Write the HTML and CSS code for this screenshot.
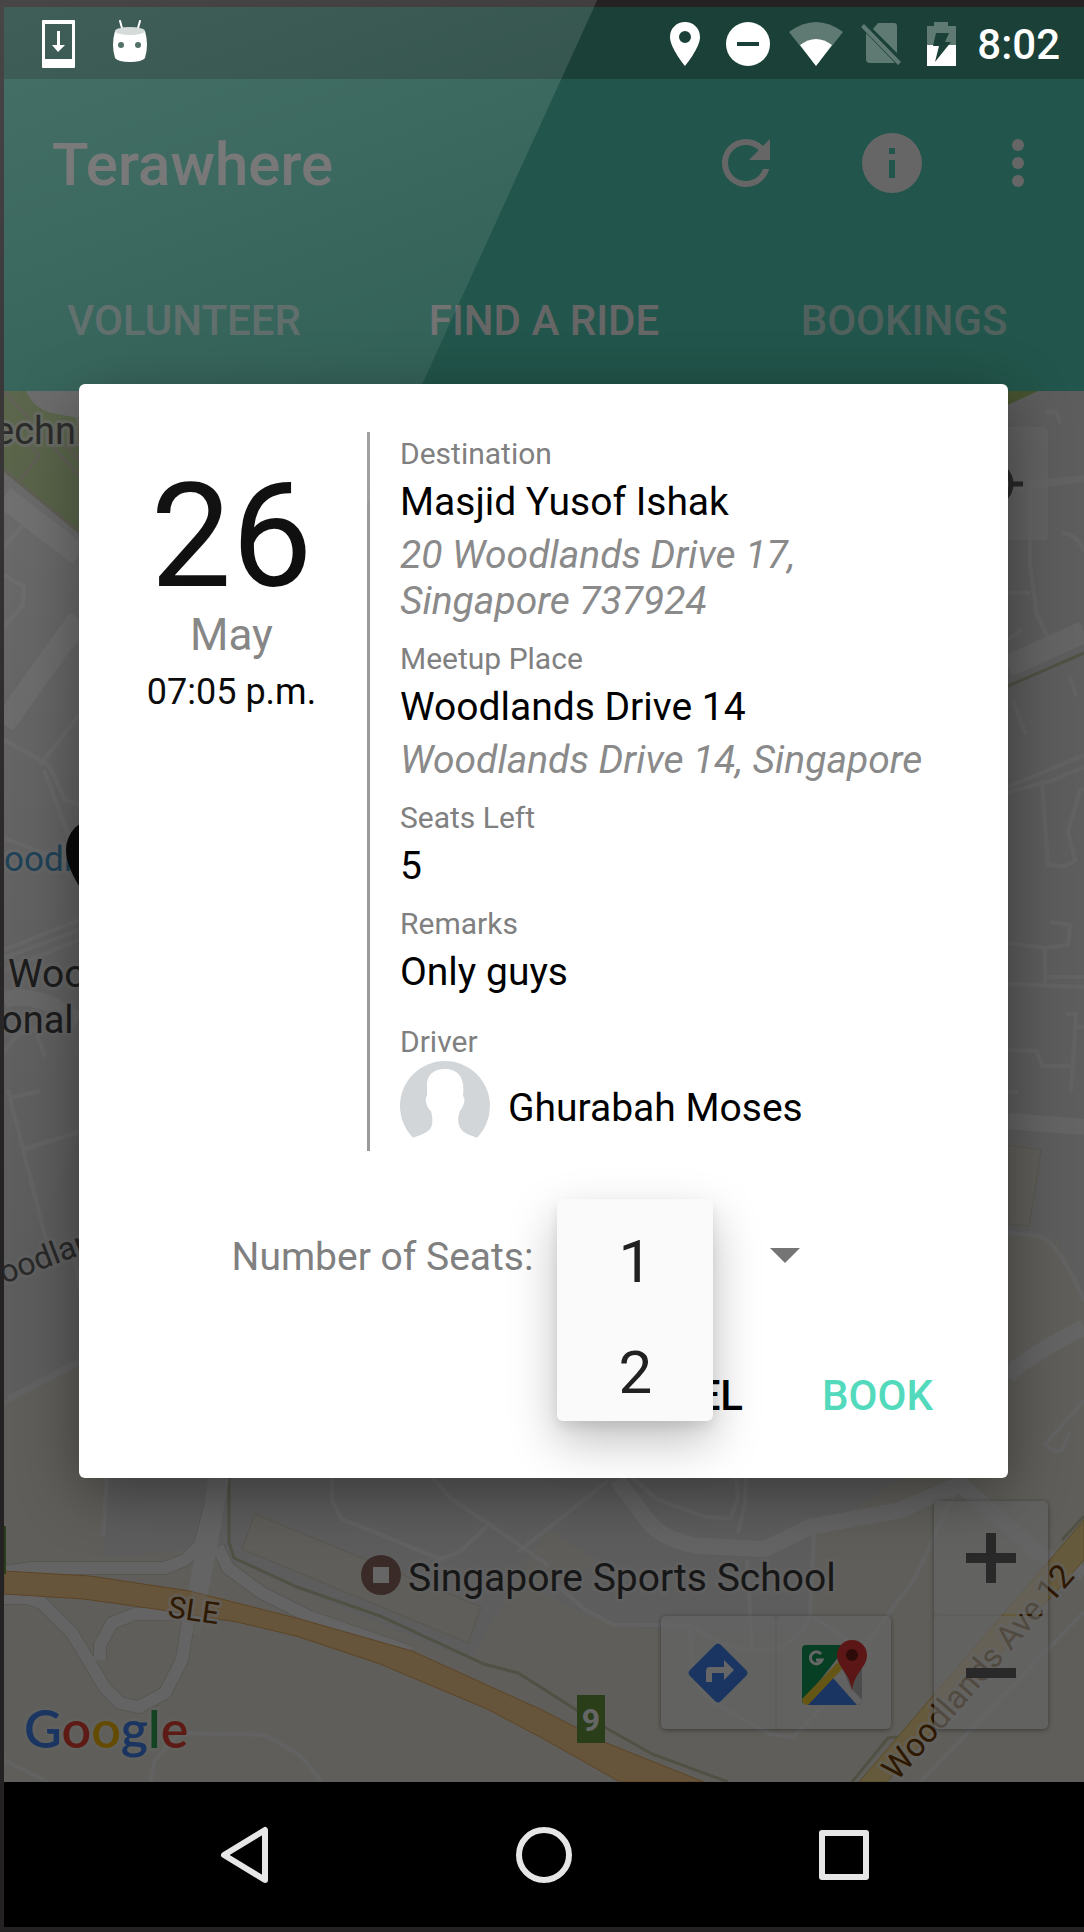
FILE: index.html
```html
<!DOCTYPE html>
<html lang="en">
<head>
<meta charset="utf-8">
<meta name="viewport" content="width=device-width, initial-scale=1">
<title>Terawhere</title>
<link rel="stylesheet" href="styles.css">
</head>
<body>
<div class="device">
  <div class="status">
    <svg class="status-download" viewBox="0 0 33 48" width="33" height="48" aria-hidden="true"><path fill="#fff" fill-rule="evenodd" d="M1 0h31q1 0 1 1v46q0 1-1 1H1q-1 0-1-1V1q0-1 1-1zM3 4v35h27V4z"/><path fill="#fff" d="M15 11h3v14h5l-7 7-6-7h5z"/></svg>
    <svg class="status-android" viewBox="0 0 34 42" width="34" height="42" aria-hidden="true"><path stroke="#fff" stroke-width="2" stroke-linecap="round" d="M7 1l2 7M27 1l-2 7"/><path fill="#fff" d="M2 11q15 4 30 0 4 14 0 27-3 4-15 4T2 38q-4-13 0-27z"/><ellipse cx="17" cy="11" rx="15" ry="4" fill="#cdd5d3"/><circle cx="8" cy="25" r="3" fill="#355950"/><circle cx="25" cy="25" r="3" fill="#355950"/></svg>
    <span class="spacer"></span>
    <svg viewBox="0 0 30 44" width="30" height="44" aria-hidden="true"><path fill="#fff" fill-rule="evenodd" d="M15 0C7 0 0 6 0 15c0 11 15 29 15 29s15-18 15-29C30 6 23 0 15 0zm0 9a6 6 0 1 1 0 12 6 6 0 0 1 0-12z"/></svg>
    <svg class="status-dnd" viewBox="0 0 44 44" width="44" height="44" aria-hidden="true"><circle cx="22" cy="22" r="22" fill="#fff"/><path fill="#1b4038" d="M11 20h22v4H11z"/></svg>
    <svg class="status-wifi" viewBox="0 0 54 44" width="54" height="44" aria-hidden="true"><path fill="#5f7a73" d="M0 10Q27-10 54 10L27 44z"/><path fill="#fff" d="M11 23q16-12 32 0L27 44z"/></svg>
    <svg class="status-sim" viewBox="0 0 40 44" width="40" height="44" aria-hidden="true"><path fill="#5f7a73" d="M17 1h16q3 0 3 3v27L12 7zM5 11l29 30H9q-4 0-4-4zM0 5l3-3 37 38-3 3z"/></svg>
    <svg class="status-battery" viewBox="0 0 29 44" width="29" height="44" aria-hidden="true"><path fill="#5f7a73" d="M0 4h7V0h14v4h8v19H0z"/><path fill="#fff" d="M0 23h29v21H0z"/><path fill="#1b4038" d="M9 11h13l-4 9h6L8 40l4-16H6z"/></svg>
    <time class="clock">8:02</time>
  </div>

  <div class="app">
    <header class="header">
      <div class="toolbar">
        <h1 class="title">Terawhere</h1>
        <button class="tool" type="button" aria-label="Refresh"><svg viewBox="0 0 24 24" width="72" height="72"><path fill="#fff" d="M17.65 6.35A7.96 7.96 0 0 0 12 4a8 8 0 1 0 7.73 10h-2.08A6 6 0 1 1 12 6c1.66 0 3.14.69 4.22 1.78L13 11h7V4z"/></svg></button>
        <button class="tool" type="button" aria-label="Information"><svg viewBox="0 0 24 24" width="72" height="72"><path fill="#fff" d="M12 2a10 10 0 1 0 0 20 10 10 0 0 0 0-20zm1 15h-2v-6h2zm0-8h-2V7h2z"/></svg></button>
        <button class="tool tool-more" type="button" aria-label="More options"><svg viewBox="0 0 24 24" width="72" height="72"><g fill="#fff"><circle cx="12" cy="6" r="2"/><circle cx="12" cy="12" r="2"/><circle cx="12" cy="18" r="2"/></g></svg></button>
      </div>
      <nav class="tabs">
        <a class="tab" href="#volunteer">VOLUNTEER</a>
        <a class="tab tab-active" href="#find">FIND A RIDE</a>
        <a class="tab" href="#bookings">BOOKINGS</a>
      </nav>
    </header>

    <main class="map">
      <svg class="map-canvas" viewBox="4 391 1080 1391" preserveAspectRatio="xMidYMid slice" aria-hidden="true">
        <path fill="#e9e9e9" d="M4 391h1080v1391H4z"/>
        <!-- parks and built-up blocks -->
        <path fill="#b8d690" d="M4 391h75v141L4 472z"/>
        <path fill="#b0d078" d="M1008 391h30l-30 14z"/>
        <path fill="#e9e9e9" d="M26 391q8 18 26 22l27 5v-27z"/>
        <path fill="#edebe0" d="M4 1405l86-46 14 118v80l80-6 45 4 5 8 236 98 58-100 20-32 50 32-58 30q60 40 150 41l120 0 2-94 88-60 108-246 40 4q20 8 36 64v481H4z"/>
        <path fill="#edebe0" stroke="#dcd5bd" d="M255 1514l226 93-13 36-226-94zM1008 1145l33 5-12 76-21-2z"/>
        <!-- minor roads -->
        <g fill="none" stroke="#f5f5f5" stroke-width="4">
          <path d="M4 547l24-28M4 575l20 12-1 18-19 22M4 740l45 25 16 35 14 4M40 765l39-50M44 770l30 80M65 635l14 8M4 838l75 28M4 958l75-28M4 970l75-30M4 950l75-30M4 1052l14-18 25-6M37 1035l8 22M10 1098l30-7M8 1090l38 150M24 1149l55-17M4 1403l75-40M8 1398l71-38M75 1260l10 50"/>
          <path d="M1046 413l10-2 4 12M1008 490l76-10M1028 483l76-8M1030 480v85l7 50 11 22M1008 593h22M1062 533q14 0 22 18M1008 640l14-11M1013 702l13 32M1070 676l6 20M1008 787l76-32M1008 792l40-10 36-15M1042 780l6 85 18 1 9-6-7-28 12-42 4-1M1008 943l37 5v35M1050 922l20 3-2 20-23 3M1008 984l76 3M1045 977h39M1008 1050l29 1 5 15h28M1066 1014h10l-5 78M1076 1027h8M1008 1092h10M1008 1233l32 3q20 8 44 65M1084 1400l-39 45 10 7 7-2 8-18"/>
          <path d="M107 1477l-4 60M332 1477v24l10 18 98 40 20-7 29-28-39-26-18-21M489 1524l60 42M518 1552l90-71M632 1477l24 22 50 18 24 2 8-20-2-22M746 1477l-1 26-7 30M814 1534l-4 82q-14 32-45 34-30 2-58-14l-17-11h-76l-30-16-30-27M747 1560l5 90M690 1625q0 60 20 75l60 34 23 3 30-30 37-55 55-74 41-90M812 1616l60 40M1084 1612l-164 170M150 1782l5-22 25-27 85 2 35 20 22 27M4 1760l44 22"/>
        </g>
        <!-- main roads -->
        <g fill="none" stroke="#fbfbfb">
          <path stroke-width="22" d="M4 497l75 58M4 724l75-105M1008 666l76-34"/>
          <path stroke-width="16" d="M4 1000q30-10 75 20M1008 1121l76 6M1008 1377q10-16 76-50M617 1480l32 42q14 18 50 24l66 3 45-22 90-17 60-26 80 70 44 20"/>
        </g>
        <g fill="none" stroke="#c9c9ac" stroke-width="3">
          <path d="M1008 686l76-33M4 470l75 62M4 391l75 85M20 480l20-25-12-10 10-15M50 430l30 30M229 1477v65l5 16 63 29 83 29 104 48 34 9 24 15 50 32 60 34 76 28M1084 1516l-22 24M852 1782l36-44 10-1"/>
        </g>
        <!-- expressway interchange -->
        <g fill="none" stroke="#d9d7cc" stroke-width="14" stroke-linejoin="round">
          <path d="M4 1572l28-4h133l20-8 15-15 18-68M4 1598h24l14 5 30 30 33 55 15 15 19 4 26-14 17-33 8-50 25-105M100 1660v-15l12-22 23-9h100M218 1547l10 21 34 25 48 24 100 35"/>
        </g>
        <g fill="none" stroke="#fbfbfb" stroke-width="12" stroke-linejoin="round">
          <path d="M4 1572l28-4h133l20-8 15-15 18-68M4 1598h24l14 5 30 30 33 55 15 15 19 4 26-14 17-33 8-50 25-105M100 1660v-15l12-22 23-9h100M218 1547l10 21 34 25 48 24 100 35"/>
          <path stroke-width="20" d="M219 1477l-13 75-12 58"/>
        </g>
        <path fill="#ffd293" stroke="#e6ab60" d="M4 1571l86 5 100 15 110 28 112 32 130 59 62 32 100 40h-84l-78-44-55-29-107-45-84-28-59-14-82-13-71-10-80-5z"/>
        <path stroke="#fbfbfb" stroke-width="16" d="M206 1560l-14 74" opacity=".35"/>
        <path fill="#ffe196" stroke="#dcbc6c" d="M859 1782l225-262v40l-197 222z"/>
        <!-- labels -->
        <g class="map-text">
          <text x="-6" y="444" font-size="38">echni</text>
          <text x="4" y="871" font-size="35" fill="#3b96cc">oodl</text>
          <text x="8" y="987" font-size="39">Woo</text>
          <text x="1" y="1033" font-size="38">onal</text>
          <text font-size="32" fill="#666" transform="translate(4 1284) rotate(-21)">oodlan</text>
          <text x="408" y="1591" font-size="39">Singapore Sports School</text>
          <text font-size="30" fill="#733c00" transform="translate(167 1617) rotate(8)">SLE</text>
          <text font-size="33" fill="#733c00" transform="translate(897 1782) rotate(-49)">Woodlands Ave 12</text>
        </g>
        <path fill="#000" d="M98 818a32 32 0 0 0-32 32c0 26 32 62 32 62z"/>
        <circle cx="381" cy="1575" r="20" fill="#916c64"/><path fill="#fff" d="M373 1567h16v16h-16z"/>
        <path fill="#6b9b43" d="M577 1695h28v48h-28zM4 1526h2v48H4z"/>
        <text class="shield" x="591" y="1731">9</text>
      </svg>
      <div class="map-controls">
        <button class="control" type="button" aria-label="My location"><svg viewBox="0 0 64 64" width="64" height="64"><circle cx="32" cy="32" r="20" fill="none" stroke="#666" stroke-width="5"/><circle cx="32" cy="32" r="10" fill="#666"/><path stroke="#666" stroke-width="5" d="M32 0v12M32 52v12M0 32h12M52 32h12"/></svg></button>
        <div class="map-bottom">
          <a class="google" href="#google"><span class="g-blue">G</span><span class="g-red">o</span><span class="g-yellow">o</span><span class="g-blue">g</span><span class="g-green">l</span><span class="g-red">e</span></a>
          <div class="control-row">
            <button class="control" type="button" aria-label="Directions"><svg viewBox="0 0 60 60" width="60" height="60"><path fill="#4285f4" d="M27 2q3-3 6 0l25 25q3 3 0 6L33 58q-3 3-6 0L2 33q-3-3 0-6z"/><path fill="#fff" d="M18 39V28q0-4 4-4h14v-7l10 10-10 10v-7H24v9z"/></svg></button>
            <button class="control" type="button" aria-label="Open in Google Maps"><svg viewBox="0 0 66 66" width="66" height="66"><path fill="#0f9d58" d="M5 5h42L1 63V9q0-4 4-4z"/><path fill="#bdbdbd" d="M40 25h21v36q0 4-4 4z"/><path fill="#f4f4f4" d="M28 42l8-9 25 27q0 5-5 5z"/><path fill="#4285f4" d="M6 65l26-27 24 27z"/><path fill="#fdd835" d="M1 59l36-37 4 7L7 65q-6 0-6-6z"/><path fill="none" stroke="#fff" stroke-width="3" d="M20 14a6 6 0 1 0 1 6h-6"/><path fill="#e53935" d="M51 0a15 15 0 0 0-15 15c0 13 13 17 15 36 2-19 15-23 15-36A15 15 0 0 0 51 0z"/><circle cx="51" cy="15" r="6" fill="#701c18"/></svg></button>
          </div>
          <div class="control-col">
            <button class="control" type="button" aria-label="Zoom in"><svg viewBox="0 0 50 50" width="50" height="50"><path fill="#666" d="M20 0h10v20h20v10H30v20H20V30H0V20h20z"/></svg></button>
            <button class="control" type="button" aria-label="Zoom out"><svg viewBox="0 0 50 50" width="50" height="50"><path fill="#666" d="M0 20h50v10H0z"/></svg></button>
          </div>
        </div>
      </div>
    </main>

    <div class="scrim">
      <form class="dialog" role="dialog" aria-label="Book a ride">
        <div class="ride">
          <div class="date">
            <span class="day">26</span>
            <span class="month">May</span>
            <span class="time">07:05 p.m.</span>
          </div>
          <dl class="details">
            <div class="entry"><dt>Destination</dt><dd>Masjid Yusof Ishak</dd><dd class="address">20 Woodlands Drive 17, Singapore 737924</dd></div>
            <div class="entry"><dt>Meetup Place</dt><dd>Woodlands Drive 14</dd><dd class="address">Woodlands Drive 14, Singapore</dd></div>
            <div class="entry"><dt>Seats Left</dt><dd>5</dd></div>
            <div class="entry"><dt>Remarks</dt><dd>Only guys</dd></div>
            <div class="entry entry-driver"><dt>Driver</dt><dd class="driver">
              <svg viewBox="0 0 90 90" width="90" height="90" aria-hidden="true"><circle cx="45" cy="45" r="45" fill="#d2d6d9"/><path fill="#fff" d="M45 8c-12 0-19 7-18 18v9c-3 3 0 12 4 15 2 8 2 14-1 18-4 5-11 6-20 10v14h70V78c-9-4-16-5-19-10-3-4-4-10-1-18 4-5 6-12 3-15 2-16-3-27-18-27z"/></svg>
              <span>Ghurabah Moses</span></dd></div>
          </dl>
        </div>
        <div class="seats">
          <label for="seats">Number of Seats:</label>
          <div class="spinner">
            <select id="seats"><option>1</option><option>2</option></select>
            <svg class="caret" viewBox="0 0 30 15" width="30" height="15" aria-hidden="true"><path fill="#757575" d="M0 0h30L15 15z"/></svg>
            <ul class="menu" role="listbox" aria-label="Number of Seats">
              <li role="option" aria-selected="true">1</li>
              <li role="option" aria-selected="false">2</li>
            </ul>
          </div>
        </div>
        <div class="actions">
          <button class="action" type="button">CANCEL</button>
          <button class="action action-book" type="submit">BOOK</button>
        </div>
      </form>
    </div>
  </div>

  <nav class="system" aria-label="System">
    <button type="button" aria-label="Back"><svg viewBox="0 0 60 60" width="60" height="60"><path d="M51 5v50L10 30z"/></svg></button>
    <button type="button" aria-label="Home"><svg viewBox="0 0 60 60" width="60" height="60"><circle cx="30" cy="30" r="25"/></svg></button>
    <button type="button" aria-label="Recent apps"><svg viewBox="0 0 60 60" width="60" height="60"><path d="M8 8h44v44H8z"/></svg></button>
  </nav>
</div>
</body>
</html>
```
FILE: styles.css
```css
* { box-sizing: border-box; }
body {
  margin: 0;
  background: #252223;
  font-family: Roboto, "Liberation Sans", sans-serif;
  color: #000;
}
button { margin: 0; padding: 0; border: 0; background: none; font: inherit; color: inherit; }
svg { display: block; flex: none; }

.device {
  position: relative;
  display: flex;
  flex-direction: column;
  min-height: 100vh;
  padding: 7px 0 5px 4px;
}
/* glass highlight that runs across the screen */
.device::after {
  content: "";
  position: absolute;
  inset: 0;
  pointer-events: none;
  background: linear-gradient(160deg, rgba(255,255,255,.16), rgba(255,255,255,.08) 22%, rgba(255,255,255,.03) 38%, rgba(255,255,255,0) 55%);
  clip-path: polygon(0 0, 55.1% 0, 0 67.8%);
}

.status {
  display: flex;
  align-items: center;
  height: 72px;
  padding: 1px 24px 0 38px;
  background: #1b4038;
  color: #fff;
}
.status-download { margin-right: 38px; }
.status-android { margin-bottom: 6px; }
.spacer { flex: 1; }
.status-dnd { margin-left: 26px; }
.status-wifi { margin-left: 19px; }
.status-sim { margin-left: 18px; }
.status-battery { margin: 0 21px 0 26px; }
.clock { padding-top: 2px; font-size: 42px; font-weight: 500; line-height: 70px; }

.app {
  position: relative;
  flex: 1;
  display: flex;
  flex-direction: column;
}
.header { background: #55d4bb; color: #fff; }
.toolbar {
  display: flex;
  align-items: center;
  height: 168px;
  padding: 0 30px 0 48px;
}
.title { flex: 1; margin: 0; padding-top: 4px; font-size: 60px; font-weight: 500; line-height: 72px; }
.tool { display: grid; place-items: center; width: 146px; height: 144px; }
.tool-more { width: 72px; margin-left: 17px; }
.tabs { display: grid; grid-template-columns: repeat(3, 1fr); height: 144px; padding-top: 2px; }
.tab {
  display: grid;
  place-items: center;
  font-size: 42px;
  font-weight: 500;
  color: rgba(255,255,255,.7);
  text-decoration: none;
}
.tab-active { color: #fff; }

.map { position: relative; flex: 1; display: flex; overflow: hidden; }
.map-canvas { position: absolute; inset: 0; width: 100%; height: 100%; }
.map-text { fill: #3a3a3a; stroke: #f4f4f4; stroke-width: 6px; stroke-linejoin: round; stroke-opacity: .6; paint-order: stroke; }
.shield { fill: #fff; font-size: 32px; font-weight: 700; text-anchor: middle; }
.map-controls {
  position: relative;
  flex: 1;
  display: flex;
  flex-direction: column;
  align-items: flex-end;
  justify-content: space-between;
  padding: 36px 36px 53px 20px;
}
.map-bottom { display: flex; align-items: flex-end; align-self: stretch; }
.control-row, .control-col {
  display: flex;
  gap: 2px;
  border-radius: 5px;
  box-shadow: 0 1px 5px rgba(0,0,0,.4);
}
.control-row { margin: 0 43px 0 auto; }
.control-col { flex-direction: column; }
.control {
  display: grid;
  place-items: center;
  width: 114px;
  height: 113px;
  border-radius: 5px;
  background: rgba(250,250,250,.65);
}
.google {
  margin-bottom: -31px;
  font-family: Lato, sans-serif;
  font-size: 52px;
  line-height: 64px;
  font-weight: 600;
  text-decoration: none;
  -webkit-text-stroke: 6px rgba(255,255,255,.25);
  paint-order: stroke;
}
.g-blue { color: #4285f4; }
.g-red { color: #ea4335; }
.g-yellow { color: #fbbc05; }
.g-green { color: #34a853; }

.scrim {
  position: absolute;
  inset: 0;
  display: grid;
  align-items: center;
  padding: 0 76px 0 75px;
  background: rgba(0,0,0,.6);
}
.dialog {
  padding: 48px 48px 46px;
  border-radius: 6px;
  background: #fff;
  box-shadow: 0 14px 60px rgba(0,0,0,.4);
}
.ride { display: flex; }
.date {
  flex: 0 0 240px;
  display: flex;
  flex-direction: column;
  align-items: center;
  padding: 33px 31px 0 0;
}
.day { font-size: 144px; line-height: 144px; }
.month { margin-bottom: 9px; font-size: 44px; line-height: 53px; color: #808080; }
.time { font-size: 36px; line-height: 42px; white-space: nowrap; }
.details {
  flex: 1;
  margin: 0;
  padding: 4px 0 0 30px;
  border-left: 3px solid #9a9a9a;
}
.entry { margin-bottom: 17px; }
.entry-driver { margin: 29px 0 0; }
.details dt { font-size: 30px; line-height: 35px; color: #808080; }
.details dd { margin: 8px 0 0; font-size: 39px; line-height: 46px; }
.details .address { margin-top: 7px; font-style: italic; color: #8a8a8a; }
.details .driver { display: flex; align-items: center; gap: 18px; margin: 2px 0 0; }
.driver span { padding-top: 4px; }

.seats {
  display: flex;
  align-items: center;
  justify-content: center;
  gap: 20px;
  height: 72px;
  margin-top: 69px;
}
.seats label { padding-top: 2px; font-size: 39px; line-height: 46px; color: #808080; }
.spinner { position: relative; width: 302px; }
.spinner select {
  display: block;
  width: 100%;
  height: 72px;
  padding: 0 72px;
  border: 0;
  background: none;
  appearance: none;
  font: inherit;
  font-size: 39px;
}
.caret { position: absolute; top: 28px; right: 55px; pointer-events: none; }
.menu {
  position: absolute;
  top: -21px;
  left: 4px;
  width: 156px;
  margin: 0;
  padding: 0;
  list-style: none;
  border-radius: 6px;
  background: #fafafa;
  box-shadow: 0 20px 48px rgba(0,0,0,.25), 0 6px 12px rgba(0,0,0,.08);
  font-size: 60px;
  text-align: center;
  color: #212121;
}
.menu li { padding: 14px 0 0; line-height: 97px; }
.actions {
  display: flex;
  justify-content: flex-end;
  gap: 25px;
  margin-top: 68px;
}
.action { height: 72px; padding: 0 27px; font-size: 42px; font-weight: 500; }
.action-book { color: #53dabc; }

.system {
  display: flex;
  justify-content: center;
  height: 145px;
  background: #000;
}
.system button { display: grid; place-items: center; flex: 0 1 300px; }
.system svg { fill: none; stroke: #e6e6e6; stroke-width: 6; stroke-linejoin: round; }
```
